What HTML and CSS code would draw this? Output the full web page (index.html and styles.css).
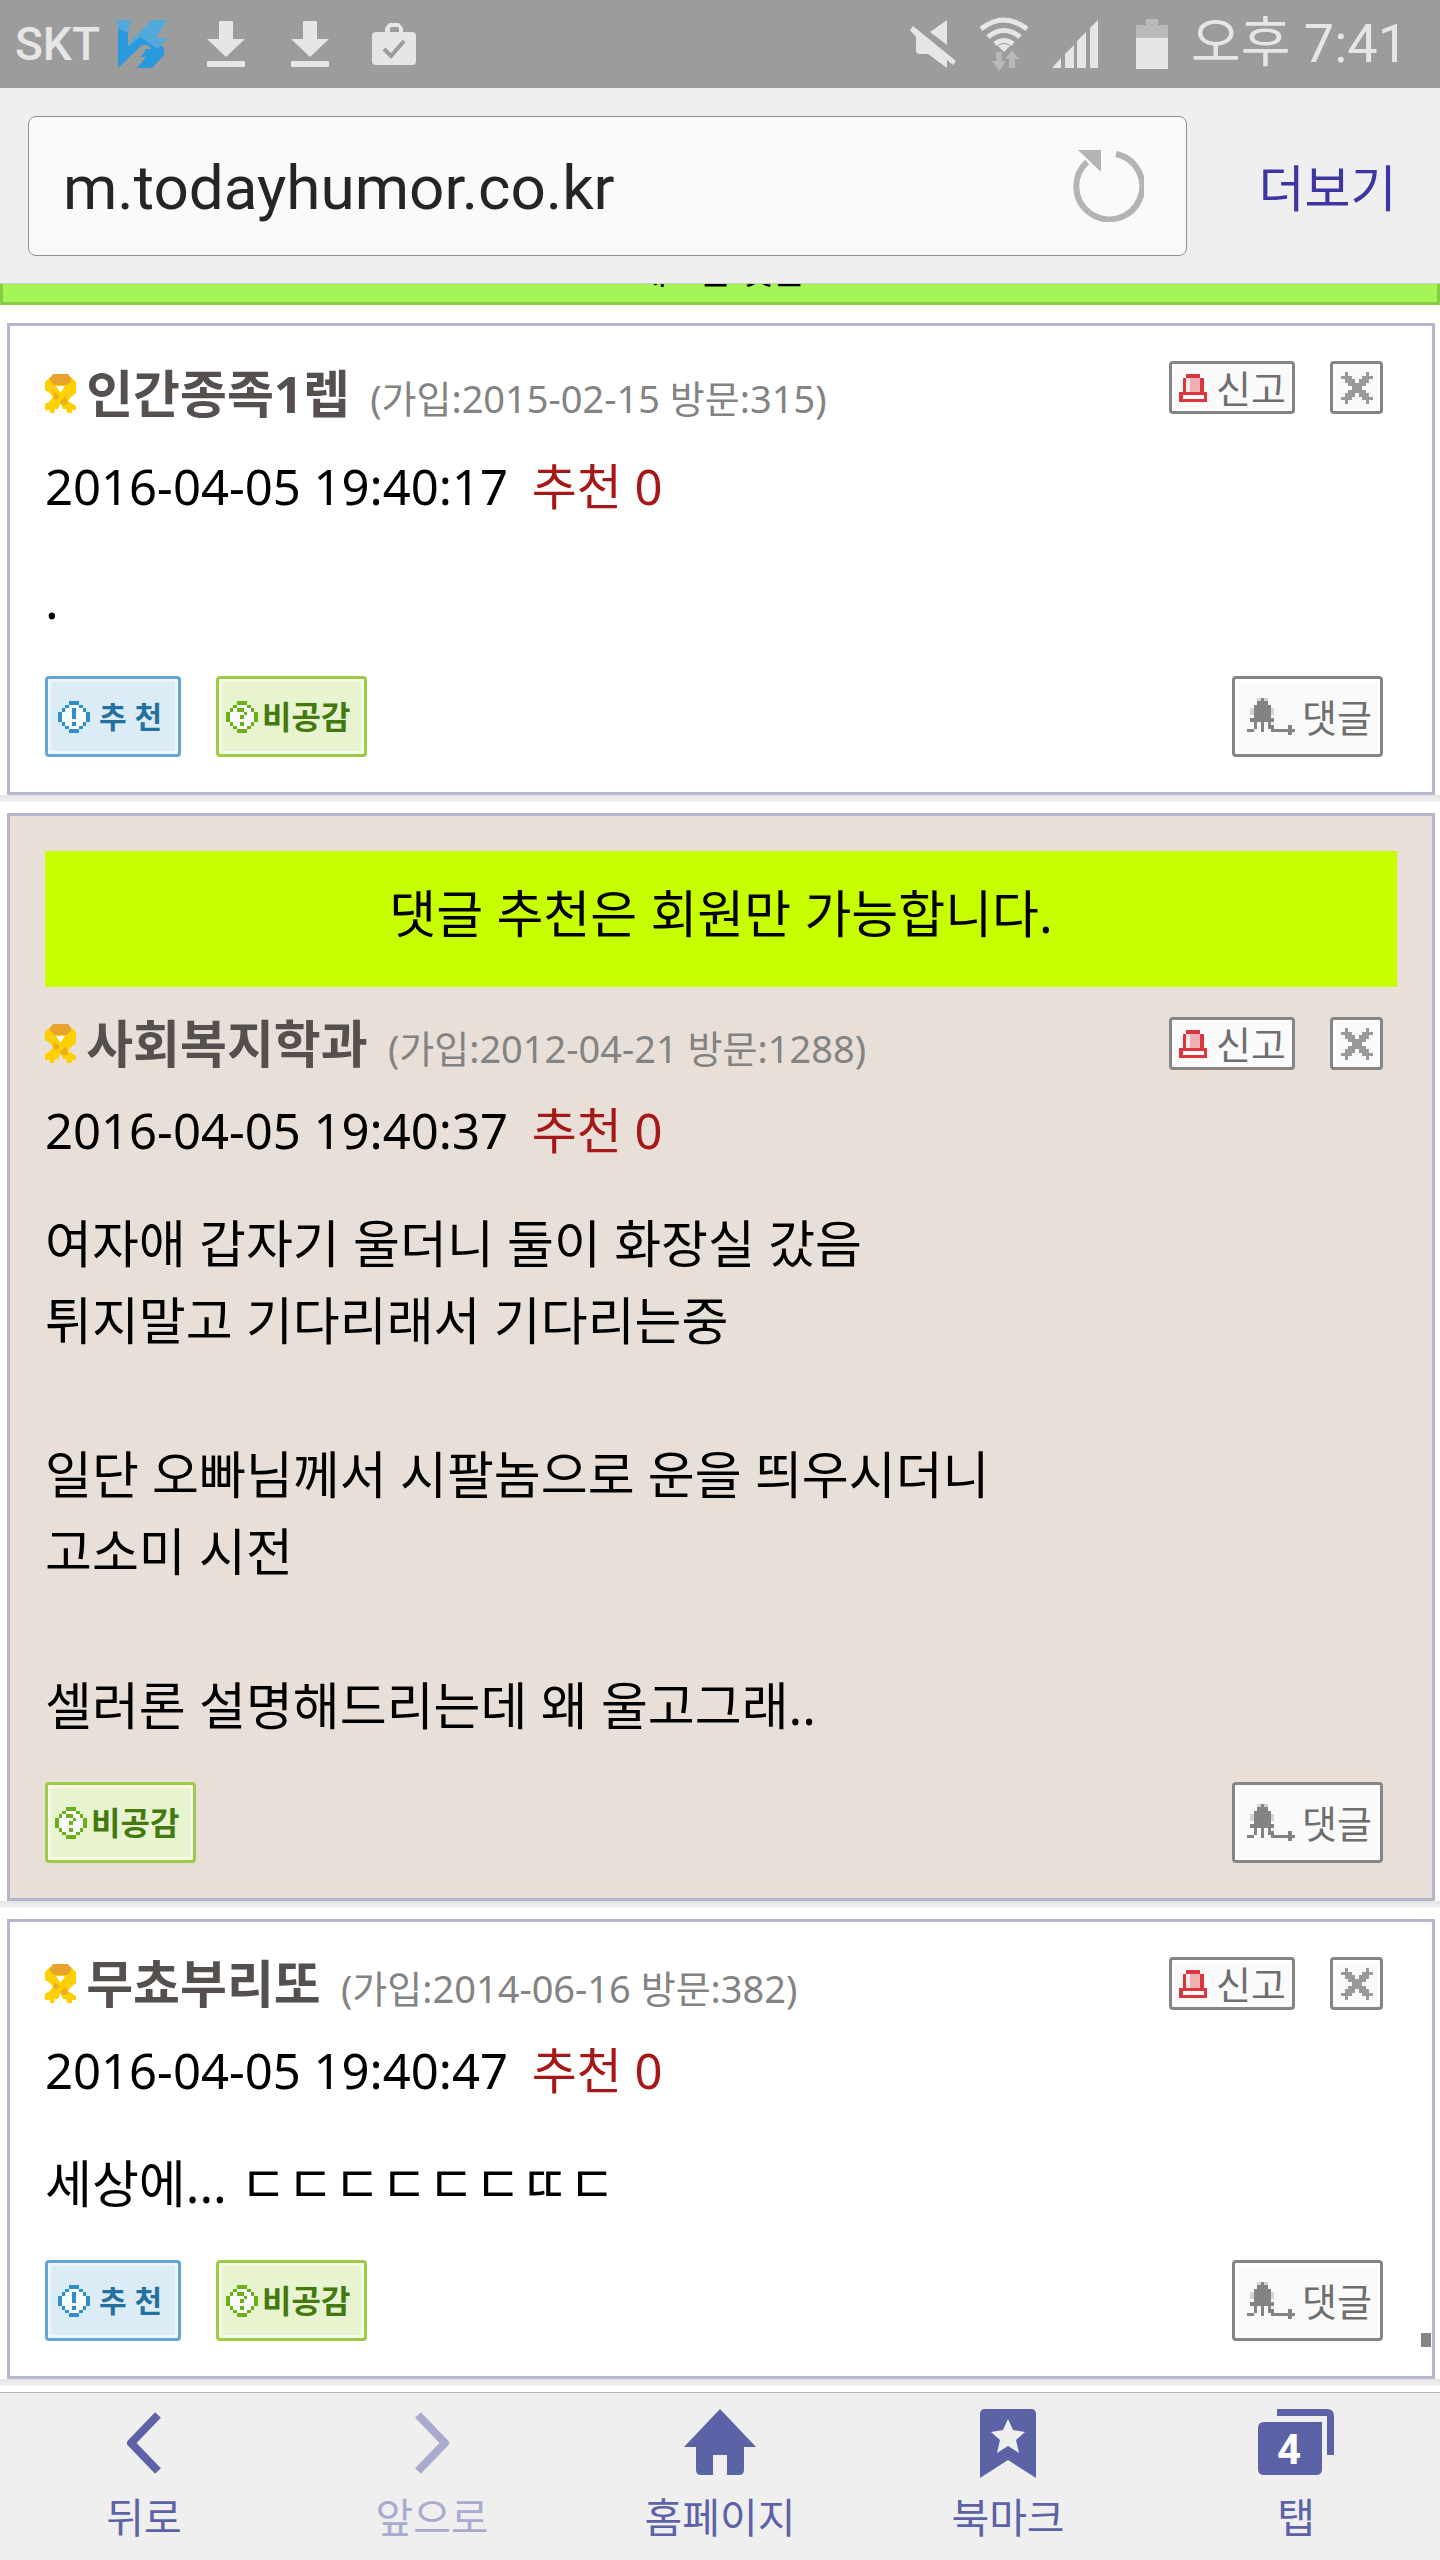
FILE: index.html
```html
<!DOCTYPE html>
<html lang="ko">
<head>
    <meta charset="UTF-8">
    <meta name="viewport" content="width=device-width, initial-scale=1.0">
    <title>오늘의유머</title>
    <link rel="stylesheet" href="styles.css">
</head>
<body>
    <!-- Shared icons -->
    <svg class="sprite" aria-hidden="true">
        <symbol id="ribbon" viewBox="0 0 31 39" preserveAspectRatio="none">
            <path fill="#ffd000" d="M5 3h21l5 5v11l-5 4-3 4 8 5v4h-4v3h-5l-1-4h-3l-2-5h-1l-2 5h-3l-1 4H5v-3H0v-6l5-3 3-4-3-4-5-3V8z"/>
            <path fill="#eaa22e" d="M8 0h15l3 4v3l-4 4H9L5 7V4z"/>
            <path fill="#edae1c" d="M10 18l5 5-4 3-3-3zM20 23l3 4-1 4h-5l-2-3z"/>
            <path fill="#fff" d="M11 12h9l-4 6h-1z"/>
        </symbol>
        <symbol id="siren" viewBox="0 0 8 8">
            <path fill="#efb0b4" d="M2 1h4v4h-4z"/>
            <path fill="#fbe9ea" d="M2 1h1v4h-1z"/>
            <path fill="#d9363e" fill-rule="evenodd" d="M2 0h4v1h1v4h1v3h-8v-3h1v-4h1zM2 1v4h4v-4zM1 6v1h6v-1z"/>
        </symbol>
        <symbol id="cross" viewBox="0 0 9 9">
            <path fill="#999" d="M1 0h1v1h1v1h1v1h1v-1h1v-1h1v-1h1v1h1v1h-1v1h-1v1h-1v1h1v1h1v1h1v1h-1v1h-1v-1h-1v-1h-1v-1h-1v1h-1v1h-1v1h-1v-1h-1v-1h1v-1h1v-1h1v-1h-1v-1h-1v-1h-1v-1h1z"/>
        </symbol>
        <symbol id="circle" viewBox="0 0 9 9">
            <path fill="#f8fbfd" d="M3 1h3v1h1v1h1v3h-1v1h-1v1h-3v-1h-1v-1h-1v-3h1v-1h1z"/>
            <path fill="currentColor" d="M3 0h3v1h-3zM2 1h1v1h-1zM6 1h1v1h-1zM1 2h1v1h-1zM7 2h1v1h-1zM0 3h1v3h-1zM8 3h1v3h-1zM1 6h1v1h-1zM7 6h1v1h-1zM2 7h1v1h-1zM6 7h1v1h-1zM3 8h3v1h-3z"/>
        </symbol>
        <symbol id="good" viewBox="0 0 9 9">
            <use href="#circle"/>
            <path fill="currentColor" d="M4 2h1v3h-1zM4 6h1v1h-1z"/>
        </symbol>
        <symbol id="bad" viewBox="0 0 9 9">
            <use href="#circle"/>
            <path fill="currentColor" d="M3 2h2v1h-2zM5 3h1v1h-1zM4 4h1v1h-1zM4 6h1v1h-1z"/>
        </symbol>
        <symbol id="squid" viewBox="0 0 14 11">
            <path fill="#d4d4d4" d="M3 0h3v1h-3zM1 3h7v2h-7z"/>
            <path fill="#838383" d="M4 0h1v1h1v1h1v4h1v1h-1v1h1v1h4v-1h1v1h1v1h-1v1h-1v-1h-5v-1h-1v-2h-1v3h-1v-3h-1v2h-1v1h-2v-1h2v-2h-1v-1h1v-4h1v-1h1z"/>
        </symbol>
    </svg>

    <!-- Phone status bar -->
    <div class="status">
        <span class="carrier">SKT</span>
        <svg class="ic-v3" width="54" height="48" viewBox="0 0 54 48">
            <path fill="#2a9ade" d="M3 8l10 5v13l10-9 12-1 14 12v7L37 48H22l9-11h-5l5-8h6l-5-4h-5L3 48z"/>
            <path fill="#54a9dc" d="M0 0h17l-3 5v18L37 0h15L41 18h11l-9 11-18-12-11 9V13L3 8V5z"/>
        </svg>
        <svg class="ic-down" width="38" height="46" viewBox="0 0 38 46"><path d="M12 0h14v18h12L19 36 0 18h12zM0 40h38v6H0z"/></svg>
        <svg class="ic-down" width="38" height="46" viewBox="0 0 38 46"><path d="M12 0h14v18h12L19 36 0 18h12zM0 40h38v6H0z"/></svg>
        <svg class="ic-bag" width="44" height="42" viewBox="0 0 44 42">
            <path fill-rule="evenodd" d="M13 9V5l4-5h10l4 5v4h9q4 0 4 4v25q0 4-4 4H4q-4 0-4-4V13q0-4 4-4zM18 9h9V5l-1-1h-7l-1 1z"/>
            <path fill="none" stroke="#9c9c9c" stroke-width="4" d="M12 26l7 7 13-15"/>
        </svg>
        <div class="status-right">
            <svg width="46" height="48" viewBox="0 0 46 48"><path d="M37 0v25L20 12zM3 6l43 35-3 4-6-5v8L18 34H10q-4 0-4-4V17L0 10z"/></svg>
            <svg class="ic-wifi" width="50" height="54" viewBox="0 0 50 54">
                <g fill="none" stroke="#e6e6e6" stroke-width="5">
                    <path d="M2 12q23-18 46 0"/><path d="M9 20q16-13 32 0"/><path d="M16 27q9-7 18 0"/>
                </g>
                <path d="M19 29q6-4 12 0l-6 6z"/>
                <path fill="#b8b8b8" d="M17 35h6v9h4l-7 10-7-10h4zM30 51v-9h-4l7-9 7 9h-4v9z"/>
            </svg>
            <svg width="47" height="48" viewBox="0 0 47 48"><path d="M0 48l9-10v10zM13 48V34l9-9v23zM25 48V21l9-9v36zM38 48V8l8-8v48z"/></svg>
            <svg class="ic-battery" width="32" height="50" viewBox="0 0 32 50">
                <path fill="#bababa" d="M10 0h12v6h10v14H0V6h10z"/><path d="M0 19h32v31H0z"/>
            </svg>
            <span class="clock">오후 7:41</span>
        </div>
    </div>

    <!-- Browser address bar -->
    <header class="browser">
        <div class="address">
            <input class="address-input" type="text" value="m.todayhumor.co.kr" aria-label="주소">
            <button class="reload" type="button" aria-label="새로고침">
                <svg width="72" height="72" viewBox="0 0 72 72">
                    <path fill="none" stroke="#b4b4b4" stroke-width="6" d="M44 4A33 33 0 1 1 15 12"/>
                    <path fill="#b4b4b4" d="M6 0h23v22z"/>
                </svg>
            </button>
        </div>
        <button class="more" type="button">더보기</button>
    </header>

    <main class="comments">
        <a class="new-comment" href="#">새로운 댓글</a>

        <article class="comment comment-tall">
            <div class="comment-head">
                <div class="user">
                    <svg class="ribbon"><use href="#ribbon"/></svg>
                    <b class="nick">인간종족1렙</b>
                    <span class="joined">(가입:2015-02-15 방문:315)</span>
                </div>
                <button class="btn btn-small" type="button"><svg class="ic-siren"><use href="#siren"/></svg>신고</button>
                <button class="btn btn-close" type="button" aria-label="닫기"><svg class="ic-9"><use href="#cross"/></svg></button>
            </div>
            <p class="date">2016-04-05 19:40:17 <span class="votes">추천 0</span></p>
            <p class="text">.</p>
            <div class="actions">
                <button class="btn btn-good" type="button"><svg class="ic-9"><use href="#good"/></svg>추 천</button>
                <button class="btn btn-bad" type="button"><svg class="ic-9"><use href="#bad"/></svg>비공감</button>
                <button class="btn btn-reply" type="button"><svg class="ic-squid"><use href="#squid"/></svg>댓글</button>
            </div>
        </article>

        <article class="comment comment-writer">
            <p class="notice">댓글 추천은 회원만 가능합니다.</p>
            <div class="comment-head">
                <div class="user">
                    <svg class="ribbon"><use href="#ribbon"/></svg>
                    <b class="nick">사회복지학과</b>
                    <span class="joined">(가입:2012-04-21 방문:1288)</span>
                </div>
                <button class="btn btn-small" type="button"><svg class="ic-siren"><use href="#siren"/></svg>신고</button>
                <button class="btn btn-close" type="button" aria-label="닫기"><svg class="ic-9"><use href="#cross"/></svg></button>
            </div>
            <p class="date">2016-04-05 19:40:37 <span class="votes">추천 0</span></p>
            <p class="text">여자애 갑자기 울더니 둘이 화장실 갔음<br>튀지말고 기다리래서 기다리는중<br><br>일단 오빠님께서 시팔놈으로 운을 띄우시더니<br>고소미 시전<br><br>셀러론 설명해드리는데 왜 울고그래..</p>
            <div class="actions">
                <button class="btn btn-bad" type="button"><svg class="ic-9"><use href="#bad"/></svg>비공감</button>
                <button class="btn btn-reply" type="button"><svg class="ic-squid"><use href="#squid"/></svg>댓글</button>
            </div>
        </article>

        <article class="comment">
            <div class="comment-head">
                <div class="user">
                    <svg class="ribbon"><use href="#ribbon"/></svg>
                    <b class="nick">무쵸부리또</b>
                    <span class="joined">(가입:2014-06-16 방문:382)</span>
                </div>
                <button class="btn btn-small" type="button"><svg class="ic-siren"><use href="#siren"/></svg>신고</button>
                <button class="btn btn-close" type="button" aria-label="닫기"><svg class="ic-9"><use href="#cross"/></svg></button>
            </div>
            <p class="date">2016-04-05 19:40:47 <span class="votes">추천 0</span></p>
            <p class="text">세상에... ㄷㄷㄷㄷㄷㄷㄸㄷ</p>
            <div class="actions">
                <button class="btn btn-good" type="button"><svg class="ic-9"><use href="#good"/></svg>추 천</button>
                <button class="btn btn-bad" type="button"><svg class="ic-9"><use href="#bad"/></svg>비공감</button>
                <button class="btn btn-reply" type="button"><svg class="ic-squid"><use href="#squid"/></svg>댓글</button>
            </div>
            <span class="scroll-thumb"></span>
        </article>
    </main>

    <!-- Browser toolbar -->
    <nav class="toolbar">
        <button class="tool" type="button">
            <svg width="36" height="70" viewBox="0 0 36 70"><path fill="none" stroke="currentColor" stroke-width="8" stroke-linejoin="round" d="M32 6L5 34l27 28"/></svg>
            뒤로
        </button>
        <button class="tool" type="button" disabled>
            <svg width="36" height="70" viewBox="0 0 36 70"><path fill="none" stroke="currentColor" stroke-width="8" stroke-linejoin="round" d="M4 6l27 28L4 62"/></svg>
            앞으로
        </button>
        <button class="tool" type="button">
            <svg width="72" height="70" viewBox="0 0 72 70"><path fill="currentColor" d="M36 0l36 38H60v23q0 5-5 5H43V46H29v20H17q-5 0-5-5V38H0z"/></svg>
            홈페이지
        </button>
        <button class="tool" type="button">
            <svg width="56" height="70" viewBox="0 0 56 70">
                <path fill="currentColor" d="M5 0h46q5 0 5 5v64L28 51 0 69V5q0-5 5-5z"/>
                <path fill="#efefef" d="M28 10l5 11 12 2-9 8 3 13-11-7-11 7 3-13-9-8 12-2z"/>
            </svg>
            북마크
        </button>
        <button class="tool" type="button">
            <svg width="76" height="70" viewBox="0 0 76 70">
                <path fill="currentColor" d="M6 13h58v47q0 6-6 6H6q-6 0-6-6V19q0-6 6-6zM19 0h50q7 0 7 7v39h-7V7H19z"/>
                <text class="tab-count" x="31" y="55" text-anchor="middle">4</text>
            </svg>
            탭
        </button>
    </nav>
</body>
</html>
```

FILE: styles.css
```css
* {
    box-sizing: border-box;
}
body {
    margin: 0;
    min-height: 100vh;
    display: flex;
    flex-direction: column;
    background-color: #fff;
    color: #000;
    font-family: "Noto Sans", "Noto Sans CJK KR", sans-serif;
}
p {
    margin: 0;
}
svg {
    flex: none;
}
button {
    margin: 0;
    padding: 0;
    border: 0;
    background: none;
    font-family: inherit;
}
.sprite {
    position: absolute;
    width: 0;
    height: 0;
}

/* status bar */
.status {
    display: flex;
    align-items: center;
    height: 88px;
    padding: 0 32px 0 15px;
    background-color: #9c9c9c;
    color: #e6e6e6;
    fill: #e6e6e6;
    font-family: Roboto, "Noto Sans CJK KR", sans-serif;
}
.carrier {
    width: 100px;
    font-size: 46px;
    font-weight: 500;
}
.ic-down {
    margin-left: 38px;
}
.ic-down + .ic-down {
    margin-left: 46px;
}
.ic-bag {
    margin-left: 43px;
}
.status-right {
    display: flex;
    align-items: center;
    margin-left: auto;
    gap: 23px;
}
.ic-battery {
    margin-left: 14px;
}
.clock {
    font-size: 54px;
    font-weight: 400;
    line-height: 88px;
}

/* address bar */
.browser {
    position: relative;
    z-index: 1;
    display: flex;
    align-items: center;
    height: 196px;
    padding: 0 0 0 28px;
    border-bottom: 1px solid #ccc;
    background-color: #efefef;
}
.address {
    flex: 1;
    display: flex;
    align-items: center;
    height: 140px;
    padding: 0 42px 0 34px;
    border: 1px solid #919191;
    border-radius: 8px;
    background-color: #fafafa;
}
.address-input {
    flex: 1;
    min-width: 0;
    padding: 4px 0 0;
    border: 0;
    outline: 0;
    background: none;
    color: #252525;
    font-family: Roboto, sans-serif;
    font-size: 62px;
    font-weight: 400;
}
.reload svg {
    display: block;
}
.more {
    width: 253px;
    padding-left: 28px;
    text-align: center;
    color: #3b36a3;
    font-size: 50px;
}

/* comments */
.new-comment {
    display: block;
    margin: -45px 0 18px;
    border: solid #88cc44;
    border-width: 0 3px 3px;
    background-color: #a4f556;
    color: #000;
    font-size: 35px;
    line-height: 63px;
    text-align: center;
    text-decoration: none;
}
.comment {
    position: relative;
    margin: 0 5px 18px 7px;
    padding: 35px;
    border: 3px solid #b4b6cc;
}
/* grey line under each comment, edge to edge */
.comment::after {
    content: "";
    position: absolute;
    top: 100%;
    left: -10px;
    right: -8px;
    height: 7px;
    margin-top: 3px;
    background: linear-gradient(#e4e4e4, #f3f3f3);
}
.comment:last-child {
    margin-bottom: 11px;
}
.comment-writer {
    background-color: #e8e0d8;
}
.notice {
    height: 136px;
    margin: 0 0 30px;
    background-color: #c8ff00;
    font-size: 51px;
    line-height: 124px;
    text-align: center;
}
.comment-head {
    display: flex;
    align-items: flex-start;
    height: 54px;
    padding-right: 14px;
}
.comment-tall .comment-head {
    height: 66px;
}
.user {
    flex: 1;
    align-self: center;
    padding-top: 12px;
    line-height: 54px;
    white-space: nowrap;
}
.ribbon {
    width: 31px;
    height: 39px;
}
.nick {
    margin: 0 16px 0 -3px;
    padding-left: 9px;
    color: #55504e;
    font-size: 51px;
}
.joined {
    color: #838383;
    font-size: 38px;
}
.date {
    margin-top: 26px;
    font-size: 49px;
    line-height: 66px;
}
.votes {
    margin-left: 11px;
    color: #a61717;
}
.text {
    margin-top: 42px;
    font-size: 51px;
    line-height: 77px;
}
.actions {
    display: flex;
    gap: 35px;
    margin-top: 38px;
    padding-right: 14px;
}
.btn {
    display: flex;
    align-items: center;
    height: 81px;
    border: 3px solid #858585;
    border-radius: 4px;
    background-color: #fafafa;
    box-shadow: inset 0 0 0 3px rgba(255, 255, 255, 0.5);
    color: #6e6e6e;
    font-size: 32px;
    line-height: 40px;
    white-space: nowrap;
}
.btn svg {
    shape-rendering: crispEdges;
}
.ic-9 {
    width: 32px;
    height: 32px;
}
.ic-siren {
    width: 28px;
    height: 28px;
}
.ic-squid {
    width: 48px;
    height: 39px;
}
.btn-small {
    width: 126px;
    height: 53px;
    padding-left: 7px;
    gap: 9px;
    font-size: 38px;
}
.btn-close {
    justify-content: center;
    width: 53px;
    height: 53px;
    margin-left: 35px;
}
.btn-good {
    width: 136px;
    padding-left: 10px;
    gap: 9px;
    border-color: #62a7d3;
    background-color: #dcecf7;
    color: #25709d;
    font-weight: bold;
    font-size: 30px;
}
.btn-good svg {
    color: #2f8fca;
}
.btn-bad {
    width: 151px;
    padding-left: 7px;
    gap: 4px;
    border-color: #9dcb45;
    background-color: #e8f3d0;
    color: #43790d;
    font-weight: bold;
}
.btn-bad svg {
    color: #6cb014;
}
.btn-reply {
    width: 151px;
    margin-left: auto;
    padding-left: 12px;
    gap: 7px;
    font-size: 38px;
}
.scroll-thumb {
    position: absolute;
    right: 1px;
    bottom: 29px;
    width: 10px;
    height: 14px;
    background-color: #858585;
}

/* toolbar */
.toolbar {
    display: flex;
    height: 168px;
    margin-top: auto;
    border-top: 1px solid #b4b4b4;
    background-color: #efefef;
}
.tool {
    flex: 1;
    display: flex;
    flex-direction: column;
    align-items: center;
    padding-top: 16px;
    color: #5c62a6;
    font-size: 41px;
    line-height: 76px;
}
.tool:disabled {
    color: #a9abce;
}
.tab-count {
    fill: #fff;
    font-family: Roboto, sans-serif;
    font-size: 42px;
    font-weight: bold;
}
```
